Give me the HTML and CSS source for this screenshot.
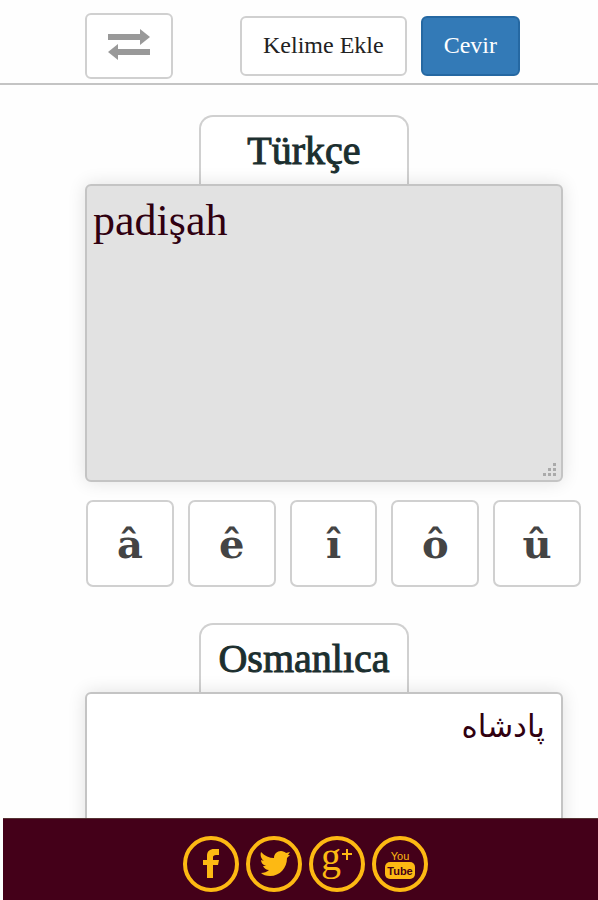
FILE: index.html
```html
<!DOCTYPE html>
<html lang="tr">
<head>
  <meta charset="UTF-8">
  <meta name="viewport" content="width=device-width, initial-scale=1.0">
  <title>Türkçe - Osmanlıca Çeviri</title>
  <link rel="stylesheet" href="styles.css">
</head>
<body>
  <header class="toolbar">
    <button type="button" class="btn btn-swap" aria-label="Dilleri değiştir">
      <svg width="44" height="34" viewBox="0 0 44 34">
        <path d="M1 6h32V1l10 8-10 8v-5H1z"/>
        <path d="M43 21H11v-5L1 24l10 8v-5h32z"/>
      </svg>
    </button>
    <button type="button" class="btn">Kelime Ekle</button>
    <button type="submit" class="btn btn-primary">Cevir</button>
  </header>

  <main>
    <section class="panel">
      <label class="tab" for="turkce">Türkçe</label>
      <div class="box">
        <textarea id="turkce" class="source" spellcheck="false">padişah</textarea>
        <svg class="grip" width="14" height="14" viewBox="0 0 14 14">
          <path d="M10 0h3v3h-3zM5 5h3v3H5zM10 5h3v3h-3zM0 10h3v3H0zM5 10h3v3H5zM10 10h3v3h-3z"/>
        </svg>
      </div>
    </section>

    <div class="keys">
      <button type="button" class="key">â</button>
      <button type="button" class="key">ê</button>
      <button type="button" class="key">î</button>
      <button type="button" class="key">ô</button>
      <button type="button" class="key">û</button>
    </div>

    <section class="panel">
      <label class="tab" for="osmanlica">Osmanlıca</label>
      <div class="box">
        <textarea id="osmanlica" class="result" dir="rtl" lang="ota" spellcheck="false">پادشاه</textarea>
      </div>
    </section>
  </main>

  <footer class="social">
    <a href="#facebook" aria-label="Facebook">
      <svg width="58" height="58" viewBox="0 0 58 58">
        <circle class="ring" cx="29" cy="29" r="26"/>
        <path d="M25 43V30h-4v-5h4v-4c0-5 3-7 7-7h5v6h-3c-2 0-3 1-3 2v3h6l-1 5h-5v13z"/>
      </svg>
    </a>
    <a href="#twitter" aria-label="Twitter">
      <svg width="58" height="58" viewBox="0 0 58 58">
        <circle class="ring" cx="29" cy="29" r="26"/>
        <path d="M16 17c4 4 8 6 13 6 0-4 3-7 7-7 2 0 4 1 5 2l4-1-2 3 2 0-3 3c0 10-7 18-17 18-4 0-7-1-9-3 3 0 6-1 8-3-3 0-5-2-6-4h3c-3-1-5-3-5-6l3 1c-3-2-4-6-3-9z"/>
      </svg>
    </a>
    <a href="#google" aria-label="Google Plus">
      <svg width="58" height="58" viewBox="0 0 58 58">
        <circle class="ring" cx="29" cy="29" r="26"/>
        <text class="g" x="13" y="35">g</text>
        <path d="M38 14h2v4h4v2h-4v5h-2v-5h-4v-2h4z"/>
      </svg>
    </a>
    <a href="#youtube" aria-label="YouTube">
      <svg width="58" height="58" viewBox="0 0 58 58">
        <circle class="ring" cx="29" cy="29" r="26"/>
        <text class="you" x="29" y="25">You</text>
        <rect x="14" y="27" width="30" height="17" rx="5"/>
        <text class="tube" x="29" y="40">Tube</text>
      </svg>
    </a>
  </footer>
</body>
</html>
```

FILE: styles.css
```css
* {
  box-sizing: border-box;
}
body {
  margin: 0;
  font-family: "Liberation Serif", "Times New Roman", serif;
  background: #fefefe;
  color: #222;
}
.toolbar {
  display: flex;
  align-items: center;
  height: 85px;
  padding: 8px 0 0 85px;
  border-bottom: 2px solid #c4c4c4;
}
.btn {
  height: 60px;
  padding: 0 21px;
  font-family: inherit;
  font-size: 24px;
  color: #222;
  background: #fff;
  border: 2px solid #d0d0d0;
  border-radius: 6px;
}
.btn-swap {
  height: 66px;
  margin-right: 67px;
  padding: 4px 20px 0;
}
.btn-swap svg {
  fill: #999;
}
.btn-primary {
  margin-left: 14px;
  color: #fff;
  background: #337ab7;
  border-color: #2568a2;
}
main {
  padding-top: 30px;
  padding-bottom: 82px;
}
.panel {
  margin: 0 35px 0 85px;
}
.tab {
  display: block;
  width: 210px;
  height: 69px;
  margin-left: 114px;
  line-height: 68px;
  text-align: center;
  font-size: 40px;
  color: #1c2f2f;
  -webkit-text-stroke: 1px #1c2f2f;
  background: #fff;
  border: 2px solid #d0d0d0;
  border-bottom: 0;
  border-radius: 14px 14px 0 0;
}
.box {
  position: relative;
}
textarea {
  display: block;
  width: 100%;
  height: 298px;
  padding: 10px 6px;
  font-family: inherit;
  font-size: 44px;
  line-height: 50px;
  color: #300010;
  background: #fff;
  border: 2px solid #c4c4c4;
  border-radius: 6px;
  box-shadow: 0 0 18px rgba(0, 0, 0, 0.12);
  resize: none;
  outline: none;
}
.source {
  background: #e2e2e2;
}
.result {
  padding: 8px 16px;
  font-family: "Liberation Sans", "DejaVu Sans", sans-serif;
  font-size: 31px;
}
.grip {
  position: absolute;
  right: 6px;
  bottom: 5px;
  fill: #aaa;
}
.keys {
  display: grid;
  grid-template-columns: repeat(5, 1fr);
  gap: 14px;
  margin: 18px 17px 36px 86px;
}
.key {
  height: 87px;
  padding: 0;
  font-family: "DejaVu Serif", serif;
  font-size: 40px;
  font-weight: bold;
  color: #444;
  background: #fff;
  border: 2px solid #d0d0d0;
  border-radius: 7px;
}
.social {
  position: fixed;
  left: 3px;
  right: 0;
  bottom: 0;
  display: flex;
  justify-content: center;
  gap: 5px;
  height: 82px;
  padding: 16px 0 0 10px;
  background: #440019;
  border-top: 1px solid #533;
}
.social a,
.social svg {
  display: block;
}
.social svg {
  fill: #fdb913;
}
.social .ring {
  fill: none;
  stroke: #fdb913;
  stroke-width: 4px;
}
.social .g {
  font-size: 40px;
}
.social .you,
.social .tube {
  font-family: "Liberation Sans Narrow", "Liberation Sans", sans-serif;
  font-size: 11px;
  font-weight: bold;
  text-anchor: middle;
}
.social .you {
  font-weight: normal;
}
.social .tube {
  fill: #440019;
}
```
